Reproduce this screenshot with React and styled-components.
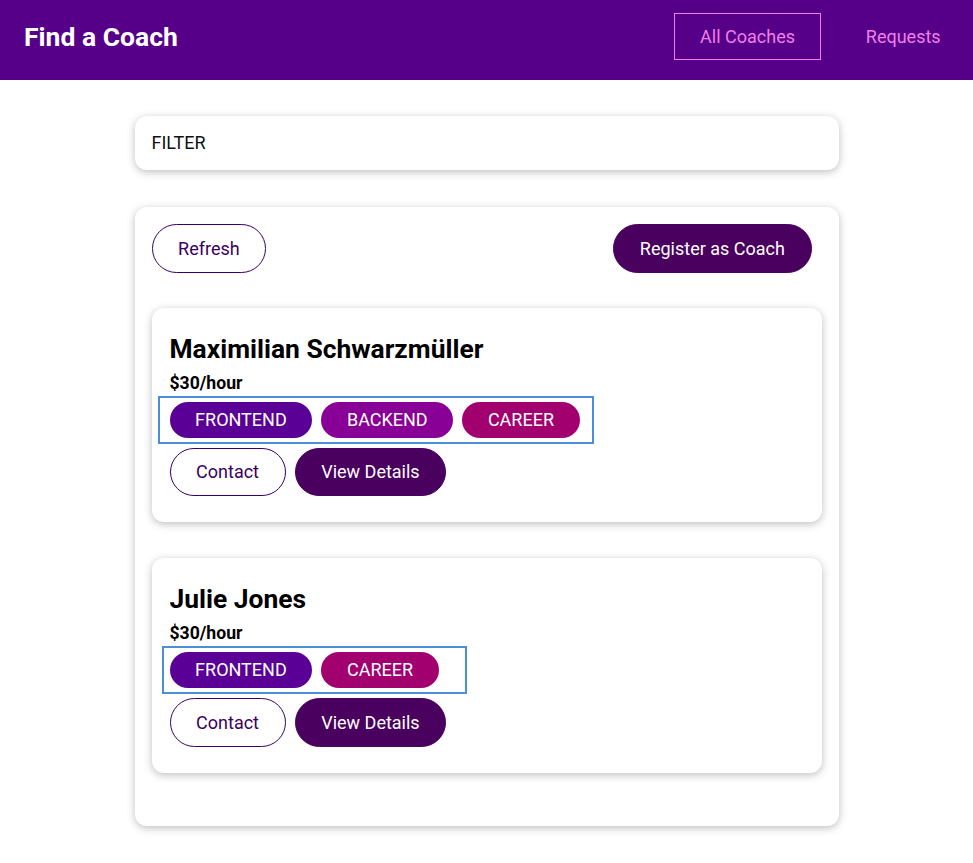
import React from "react";
import styled, { createGlobalStyle, css } from "styled-components";

const GlobalStyle = createGlobalStyle`
  html, body { margin: 0; padding: 0; background: #ffffff; }
  body { font-family: Roboto, "Liberation Sans", sans-serif; color: #000; }
  * { box-sizing: border-box; }
`;

const Header = styled.header`
  height: 80px;
  background: #56008a;
  padding: 0 0 7px 24px;
  display: flex;
  align-items: center;
`;

const Nav = styled.nav`
  flex: 1;
  display: flex;
  align-items: center;
  justify-content: space-between;
`;

const Title = styled.h1`
  margin: 0;
  font-size: 26.5px;
  font-weight: 700;
  color: #ffffff;
  line-height: 30px;
`;

const NavList = styled.ul`
  list-style: none;
  margin: 0;
  padding: 0;
  display: flex;
  gap: 18px;
  margin-right: 6px;
`;

const NavLink = styled.a`
  display: inline-block;
  text-decoration: none;
  color: #ef7fe6;
  font-size: 18px;
  line-height: 21px;
  padding: 12px 25.4px;
  border: 1px solid ${(p) => (p.$active ? "#ef7fe6" : "transparent")};
  cursor: pointer;
`;

const Main = styled.main`
  padding: 36px 0 30px;
  display: flex;
  flex-direction: column;
  align-items: center;
  gap: 37px;
`;

const Card = styled.section`
  width: 704px;
  background: #fff;
  border-radius: 12px;
  box-shadow: 0 2px 8px rgba(0, 0, 0, 0.26);
  padding: 17px;
`;

const FilterLabel = styled.div`
  font-size: 18px;
  line-height: 20px;
  color: #111;
`;

const Controls = styled.div`
  display: flex;
  justify-content: space-between;
  align-items: center;
  padding-right: 10px;
`;

const Button = styled.button`
  font-family: Roboto, "Liberation Sans", sans-serif;
  font-size: 18px;
  line-height: 21px;
  padding: 12.8px 25.6px;
  border-radius: 30px;
  cursor: pointer;
  border: 1px solid #3a0061;
  ${(p) =>
    p.$flat
      ? css`
          background: #ffffff;
          color: #3a0061;
        `
      : css`
          background: #4a005e;
          border-color: #4a005e;
          color: #ffffff;
        `}
`;

const CoachList = styled.ul`
  list-style: none;
  margin: 35px 0 36px;
  padding: 0;
  display: flex;
  flex-direction: column;
  gap: 36px;
`;

const CoachCard = styled.li`
  background: #fff;
  border-radius: 12px;
  box-shadow: 0 2px 8px rgba(0, 0, 0, 0.26);
  padding: 17px 18px 26px;
`;

const Name = styled.h3`
  margin: 8px 0 7px;
  font-size: 26.4px;
  line-height: 33px;
  font-weight: 700;
`;

const Rate = styled.h4`
  margin: 0 0 8px;
  font-size: 17.6px;
  line-height: 21px;
  font-weight: 700;
`;

const BadgeRow = styled.div`
  position: relative;
  display: inline-flex;
  gap: 9px;
  margin-bottom: 10px;
`;

const Highlight = styled.div`
  position: absolute;
  top: -6px;
  bottom: -6px;
  border: 2px solid #4a90d9;
  pointer-events: none;
`;

const badgeColors = {
  frontend: "#5a0096",
  backend: "#880096",
  career: "#a2006f",
};

const Badge = styled.span`
  display: inline-block;
  background: ${(p) => badgeColors[p.$type]};
  color: #ffffff;
  font-size: 18px;
  line-height: 20px;
  padding: 8px 25.6px;
  border-radius: 30px;
  text-transform: uppercase;
`;

const Actions = styled.div`
  display: flex;
  gap: 9px;
`;

const coaches = [
  {
    id: "c1",
    name: "Maximilian Schwarzmüller",
    rate: 30,
    areas: ["frontend", "backend", "career"],
    hl: { left: -12, right: -14 },
  },
  {
    id: "c2",
    name: "Julie Jones",
    rate: 30,
    areas: ["frontend", "career"],
    hl: { left: -8, right: -28 },
  },
];

export default function App() {
  return (
    <>
      <GlobalStyle />
      <Header>
        <Nav>
          <Title>Find a Coach</Title>
          <NavList>
            <li>
              <NavLink $active>All Coaches</NavLink>
            </li>
            <li>
              <NavLink>Requests</NavLink>
            </li>
          </NavList>
        </Nav>
      </Header>
      <Main>
        <Card>
          <FilterLabel>FILTER</FilterLabel>
        </Card>
        <Card>
          <Controls>
            <Button $flat>Refresh</Button>
            <Button>Register as Coach</Button>
          </Controls>
          <CoachList>
            {coaches.map((c) => (
              <CoachCard key={c.id}>
                <Name>{c.name}</Name>
                <Rate>${c.rate}/hour</Rate>
                <div>
                  <BadgeRow>
                    {c.areas.map((a) => (
                      <Badge key={a} $type={a}>
                        {a}
                      </Badge>
                    ))}
                    <Highlight style={{ left: c.hl.left, right: c.hl.right }} />
                  </BadgeRow>
                </div>
                <Actions>
                  <Button $flat>Contact</Button>
                  <Button>View Details</Button>
                </Actions>
              </CoachCard>
            ))}
          </CoachList>
        </Card>
      </Main>
    </>
  );
}
